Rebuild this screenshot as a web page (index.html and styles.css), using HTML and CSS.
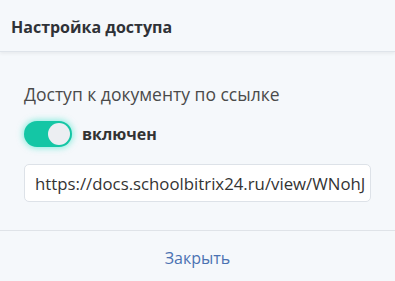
FILE: index.html
```html
<!DOCTYPE html>
<html lang="ru">
<head>
    <meta charset="UTF-8">
    <title>Настройка доступа</title>
    <link rel="stylesheet" href="styles.css">
</head>
<body>
    <div class="dialog">
        <div class="dialog-header">Настройка доступа</div>
        <div class="dialog-body">
            <p class="label">Доступ к документу по ссылке</p>
            <div class="switch-row">
                <span class="switch"><span class="knob"></span></span>
                <span class="switch-text">включен</span>
            </div>
            <div class="link-box">https://docs.schoolbitrix24.ru/view/WNohJ</div>
        </div>
        <div class="dialog-footer">
            <span class="close-link">Закрыть</span>
        </div>
    </div>
</body>
</html>
```

FILE: styles.css
```css
body {
    margin: 0;
    font-family: "Open Sans", "Noto Sans", sans-serif;
    background-color: #f5f8fb;
    color: #333;
}
.dialog {
    width: 395px;
    height: 281px;
    background-color: #f5f8fb;
}
.dialog-header {
    height: 52px;
    box-sizing: border-box;
    padding: 16px 11px 0;
    font-size: 16px;
    line-height: 22px;
    font-weight: bold;
    color: #2f3237;
    border-bottom: 1px solid #dfe4ea;
    box-shadow: 0 2px 3px rgba(0, 0, 0, 0.05);
}
.dialog-body {
    padding: 30px 24px 28px;
    border-bottom: 1px solid #dfe3e8;
}
.label {
    margin: 0;
    font-size: 17.5px;
    color: #4a4a4a;
    line-height: 24px;
}
.switch-row {
    display: flex;
    align-items: center;
    height: 26px;
    margin-top: 15px;
}
.switch {
    display: flex;
    align-items: center;
    justify-content: flex-end;
    width: 48px;
    height: 26px;
    box-sizing: border-box;
    padding-right: 2px;
    border-radius: 13px;
    background-color: #14c6a5;
    box-shadow: 0 0 6px 1px rgba(40, 225, 195, 0.55);
}
.knob {
    width: 22px;
    height: 22px;
    border-radius: 50%;
    background-color: #eceef2;
}
.switch-text {
    margin-left: 10px;
    font-size: 16px;
    font-weight: bold;
    color: #333;
}
.link-box {
    margin-top: 17px;
    height: 38px;
    box-sizing: border-box;
    padding: 0 10px;
    display: flex;
    align-items: center;
    overflow: hidden;
    white-space: nowrap;
    font-size: 16.8px;
    color: #333;
    background-color: #fff;
    border: 1px solid #dde2e8;
    border-radius: 5px;
}
.dialog-footer {
    text-align: center;
    padding-top: 16px;
}
.close-link {
    font-size: 16px;
    line-height: 22px;
    color: #4b72b2;
}
```
